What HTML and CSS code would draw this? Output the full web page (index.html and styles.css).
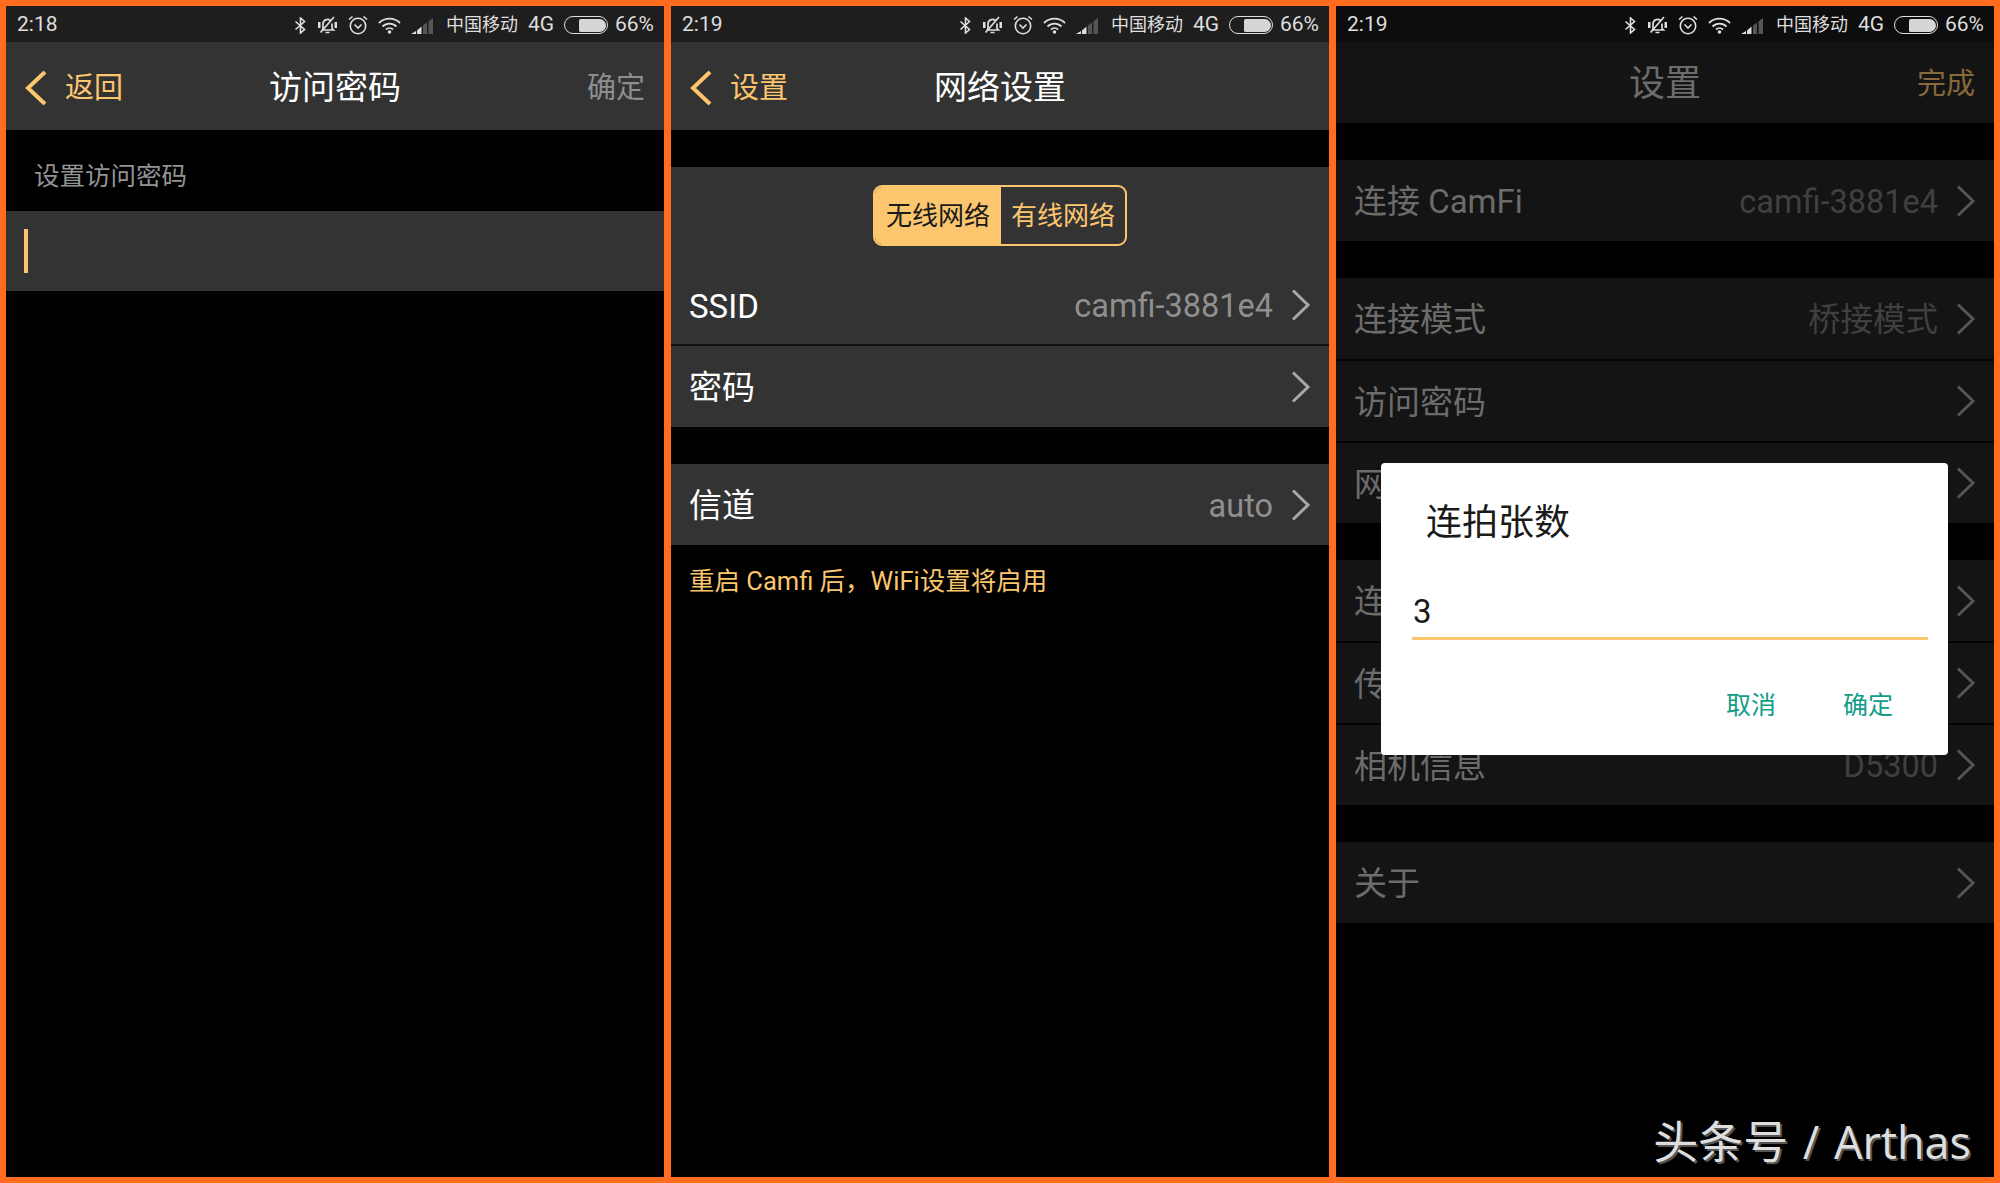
FILE: index.html
```html
<!DOCTYPE html>
<html lang="zh-CN">
<head>
  <meta charset="UTF-8">
  <title>CamFi 设置</title>
  <link rel="stylesheet" href="styles.css">
</head>
<body>
  <!-- shared icons -->
  <svg class="defs" width="0" height="0">
    <symbol id="i-bt" viewBox="0 0 13 17">
      <path d="M1.500 4.500l9 8L6.500 16V1l4 3.500-9 8" fill="none" stroke="currentColor" stroke-width="1.600"/>
    </symbol>
    <symbol id="i-bell" viewBox="0 0 21 18">
      <path d="M6 13V8a4.500 4.500 0 0 1 7.500-3.400M15 7.500V12.500l1.500 1.500H5.500l.5-1" fill="none" stroke="currentColor" stroke-width="1.700"/>
      <path d="M8.500 16.500h4M3.500 16.500L17 1" fill="none" stroke="currentColor" stroke-width="1.700"/>
      <path d="M1 6h2.500v6H1zM17.500 6H20v6h-2.500z" fill="currentColor"/>
    </symbol>
    <symbol id="i-alarm" viewBox="0 0 20 20">
      <circle cx="10" cy="11" r="7.700" fill="none" stroke="currentColor" stroke-width="1.600"/>
      <path d="M6.500 9.500l3.500 3.500 3.500-3.500M1 4.500L4.500 1.500M19 4.500L15.500 1.500" fill="none" stroke="currentColor" stroke-width="1.600"/>
    </symbol>
    <symbol id="i-wifi" viewBox="0 0 23 17">
      <path d="M1 6a15 15 0 0 1 21 0M4.500 9.500a10 10 0 0 1 14 0M8 12.500a5 5 0 0 1 7 0" fill="none" stroke="currentColor" stroke-width="1.800"/>
      <circle cx="11.500" cy="15" r="1.800" fill="currentColor"/>
    </symbol>
    <symbol id="i-signal" viewBox="0 0 23 17">
      <path d="M0 17h5v-3z" fill="currentColor"/>
      <path d="M6 17h4.500V9.500L6 13.500z" fill="#dcdcdc"/>
      <path d="M12 17h4V5.500l-4 3zM17.500 17H22V1l-4.500 3.500z" fill="#555"/>
    </symbol>
    <symbol id="i-back" viewBox="0 0 22 36">
      <path d="M20 2L3 18l17 16" fill="none" stroke="currentColor" stroke-width="4"/>
    </symbol>
    <symbol id="i-more" viewBox="0 0 20 32">
      <path d="M2 1.500L17 16 2 30.500" fill="none" stroke="currentColor" stroke-width="3"/>
    </symbol>
  </svg>

  <main class="screens">
    <!-- password screen -->
    <section class="phone">
      <div class="status">
        <span class="time">2:18</span>
        <div class="status-right">
          <svg class="ic-bt"><use href="#i-bt"/></svg>
          <svg class="ic-bell"><use href="#i-bell"/></svg>
          <svg class="ic-alarm"><use href="#i-alarm"/></svg>
          <svg class="ic-wifi"><use href="#i-wifi"/></svg>
          <svg class="ic-signal"><use href="#i-signal"/></svg>
          <span class="carrier">中国移动</span>
          <span class="net">4G</span>
          <span class="battery"><span class="battery-fill"></span></span>
          <span class="percent">66%</span>
        </div>
      </div>
      <header class="nav">
        <a class="nav-back"><svg class="back-icon"><use href="#i-back"/></svg>返回</a>
        <h1 class="nav-title">访问密码</h1>
        <span class="nav-action">确定</span>
      </header>
      <p class="field-label">设置访问密码</p>
      <div class="field"><span class="caret"></span></div>
    </section>

    <!-- network screen -->
    <section class="phone">
      <div class="status">
        <span class="time">2:19</span>
        <div class="status-right">
          <svg class="ic-bt"><use href="#i-bt"/></svg>
          <svg class="ic-bell"><use href="#i-bell"/></svg>
          <svg class="ic-alarm"><use href="#i-alarm"/></svg>
          <svg class="ic-wifi"><use href="#i-wifi"/></svg>
          <svg class="ic-signal"><use href="#i-signal"/></svg>
          <span class="carrier">中国移动</span>
          <span class="net">4G</span>
          <span class="battery"><span class="battery-fill"></span></span>
          <span class="percent">66%</span>
        </div>
      </div>
      <header class="nav">
        <a class="nav-back"><svg class="back-icon"><use href="#i-back"/></svg>设置</a>
        <h1 class="nav-title">网络设置</h1>
        <span class="nav-action"></span>
      </header>
      <div class="group group-net">
        <div class="seg-wrap">
          <div class="seg">
            <span class="seg-item seg-on">无线网络</span>
            <span class="seg-item">有线网络</span>
          </div>
        </div>
        <div class="row row-ssid"><span>SSID</span><span class="row-value">camfi-3881e4</span><svg class="more"><use href="#i-more"/></svg></div>
        <div class="row row-next"><span>密码</span><svg class="more"><use href="#i-more"/></svg></div>
      </div>
      <div class="group">
        <div class="row"><span>信道</span><span class="row-value">auto</span><svg class="more"><use href="#i-more"/></svg></div>
      </div>
      <p class="note">重启 Camfi 后，WiFi设置将启用</p>
    </section>

    <!-- settings screen, dimmed behind the dialog -->
    <section class="phone phone-dim">
      <div class="status">
        <span class="time">2:19</span>
        <div class="status-right">
          <svg class="ic-bt"><use href="#i-bt"/></svg>
          <svg class="ic-bell"><use href="#i-bell"/></svg>
          <svg class="ic-alarm"><use href="#i-alarm"/></svg>
          <svg class="ic-wifi"><use href="#i-wifi"/></svg>
          <svg class="ic-signal"><use href="#i-signal"/></svg>
          <span class="carrier">中国移动</span>
          <span class="net">4G</span>
          <span class="battery"><span class="battery-fill"></span></span>
          <span class="percent">66%</span>
        </div>
      </div>
      <header class="nav">
        <span></span>
        <h1 class="nav-title">设置</h1>
        <span class="nav-action">完成</span>
      </header>
      <div class="group">
        <div class="row"><span>连接 CamFi</span><span class="row-value">camfi-3881e4</span><svg class="more"><use href="#i-more"/></svg></div>
      </div>
      <div class="group">
        <div class="row"><span>连接模式</span><span class="row-value">桥接模式</span><svg class="more"><use href="#i-more"/></svg></div>
        <div class="row row-next"><span>访问密码</span><svg class="more"><use href="#i-more"/></svg></div>
        <div class="row row-next"><span>网</span><svg class="more"><use href="#i-more"/></svg></div>
      </div>
      <div class="group">
        <div class="row"><span>连</span><svg class="more"><use href="#i-more"/></svg></div>
        <div class="row row-next"><span>传</span><svg class="more"><use href="#i-more"/></svg></div>
        <div class="row row-next"><span>相机信息</span><span class="row-value">D5300</span><svg class="more"><use href="#i-more"/></svg></div>
      </div>
      <div class="group">
        <div class="row"><span>关于</span><svg class="more"><use href="#i-more"/></svg></div>
      </div>

      <div class="dialog">
        <h2 class="dialog-title">连拍张数</h2>
        <div class="dialog-input">3</div>
        <div class="dialog-actions">
          <span>取消</span>
          <span>确定</span>
        </div>
      </div>

      <div class="watermark">头条号 / Arthas</div>
    </section>
  </main>
</body>
</html>
```

FILE: styles.css
```css
* {
  box-sizing: border-box;
}

html, body {
  margin: 0;
  height: 100%;
}

body {
  background-color: #ff6c1f;
  color: #fff;
  font-family: Roboto, "Noto Sans CJK SC", sans-serif;
  line-height: 1.2;
  overflow: hidden;
}

.defs {
  position: absolute;
}

.screens {
  display: grid;
  grid-template-columns: repeat(3, 658px);
  column-gap: 7px;
  height: 1183px;
  padding: 6px 6px;
}

.phone {
  position: relative;
  display: flex;
  flex-direction: column;
  background-color: #000;
  overflow: hidden;
}

/* status bar */
.status {
  display: flex;
  align-items: center;
  justify-content: space-between;
  height: 36px;
  padding: 2px 10px 0 11px;
  background-color: #1e1e1e;
  color: #dedede;
  flex: none;
}

.time {
  font-size: 21px;
}

.status-right {
  display: flex;
  align-items: center;
  gap: 10px;
}

.ic-bt { width: 13px; height: 17px; }
.ic-bell { width: 21px; height: 18px; }
.ic-alarm { width: 20px; height: 20px; }
.ic-wifi { width: 23px; height: 17px; }
.ic-signal { width: 23px; height: 17px; margin-right: 2px; }

.carrier {
  font-size: 18px;
  white-space: nowrap;
}

.net {
  font-size: 21px;
}

.battery {
  display: flex;
  justify-content: flex-end;
  width: 44px;
  height: 18px;
  padding: 1.500px;
  border: 1.500px solid #dedede;
  border-radius: 9px;
  margin-right: -4px;
}

.battery-fill {
  width: 27px;
  background-color: #d6d6d6;
  border-radius: 2px 7px 7px 2px;
}

.percent {
  font-size: 21px;
  margin-left: 1px;
}

/* top bar */
.nav {
  display: grid;
  grid-template-columns: 1fr auto 1fr;
  align-items: center;
  height: 88px;
  padding: 4px 19px 0;
  background-color: #333;
  flex: none;
}

.nav-back {
  display: flex;
  align-items: center;
  gap: 18px;
  color: #fcc66f;
  font-size: 29px;
}

.back-icon {
  width: 22px;
  height: 36px;
}

.nav-title {
  margin: 0;
  font-size: 33px;
  font-weight: 400;
}

.nav-action {
  justify-self: end;
  color: #8e8e8e;
  font-size: 29px;
}

/* password field */
.field-label {
  display: flex;
  align-items: center;
  height: 81px;
  margin: 0;
  padding: 12px 0 0 28px;
  color: #939393;
  font-size: 25.500px;
}

.field {
  display: flex;
  align-items: center;
  height: 80px;
  padding-left: 18px;
  background-color: #333;
}

.caret {
  width: 4px;
  height: 44px;
  background-color: #fcc66f;
}

/* list groups */
.group {
  margin-top: 37px;
  background-color: #333;
  flex: none;
}

.seg-wrap {
  display: flex;
  justify-content: center;
  padding-top: 18px;
}

.seg {
  display: flex;
  width: 254px;
  height: 61px;
  border: 2px solid #fcc66f;
  border-radius: 9px;
  overflow: hidden;
}

.seg-item {
  flex: 1;
  display: flex;
  align-items: center;
  justify-content: center;
  padding-top: 2px;
  color: #fcc66f;
  font-size: 26px;
}

.seg-on {
  flex: none;
  width: 126px;
  background-color: #fcc66f;
  color: #1a1a1a;
}

.row {
  display: flex;
  align-items: center;
  height: 81px;
  padding: 3px 18px 0;
  font-size: 33px;
}

.row-ssid {
  height: 98px;
  padding-top: 23px;
}

.row-next {
  border-top: 2px solid #111;
  height: 83px;
}

.row-value {
  margin-left: auto;
  color: #8f8f8f;
  font-size: 32.500px;
}

/* the chevron stays centred on the row, the text sits a little lower */
.more {
  width: 20px;
  height: 32px;
  margin-left: auto;
  margin-bottom: 3px;
  color: #a8a8a8;
}

.row-value + .more {
  margin-left: 18px;
}

.note {
  margin: 21px 0 0;
  padding-left: 18px;
  color: #fcc66f;
  font-size: 25.500px;
}

/* third screen sits behind a scrim */
.phone-dim .status {
  background-color: #0d0d0d;
}

.phone-dim .nav {
  height: 81px;
  background-color: #141414;
}

.phone-dim .nav-title {
  color: #6c6c6c;
  font-size: 36px;
}

.phone-dim .nav-action {
  color: #86693a;
}

.phone-dim .group {
  background-color: #141414;
  color: #6c6c6c;
}

.phone-dim .row-next {
  border-top-color: #050505;
  height: 82px;
}

.phone-dim .row-value {
  color: #404040;
}

.phone-dim .more {
  color: #555;
}

.dialog {
  position: absolute;
  left: 45px;
  top: 457px;
  width: 567px;
  height: 292px;
  padding: 38px 20px 0 31px;
  background-color: #fff;
  border-radius: 4px;
  color: #1a1a1a;
}

.dialog-title {
  margin: 0 0 0 14px;
  font-size: 36px;
  font-weight: 400;
  line-height: 44px;
}

.dialog-input {
  height: 78px;
  margin-top: 17px;
  padding: 29px 0 0 1px;
  border-bottom: 3px solid #fcc66f;
  font-size: 33px;
  line-height: 42px;
}

.dialog-actions {
  display: flex;
  justify-content: flex-end;
  gap: 67px;
  margin-top: 51px;
  padding-right: 35px;
  color: #129c87;
  font-size: 25px;
}

.watermark {
  position: absolute;
  right: 23px;
  bottom: 5px;
  color: #dedede;
  font-family: "Open Sans", "Noto Sans CJK SC", sans-serif;
  font-size: 45px;
  line-height: 60px;
  word-spacing: 3px;
  text-shadow: 2px 2px 0 #555;
  white-space: nowrap;
}
```
